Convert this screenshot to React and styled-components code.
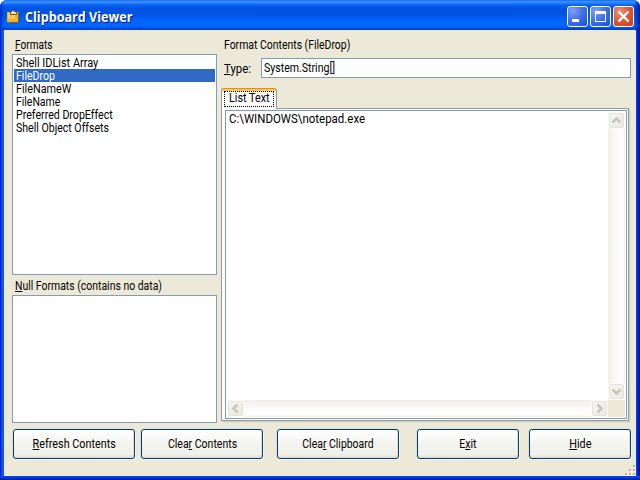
import React from 'react';
import styled, { createGlobalStyle, css } from 'styled-components';

const Global = createGlobalStyle`
  *, *::before, *::after { box-sizing: border-box; }
  html, body, #root { margin: 0; width: 640px; height: 480px; overflow: hidden; background: #fff; }
`;

const Window = styled.div`
  width: 640px;
  height: 480px;
  display: flex;
  flex-direction: column;
  overflow: hidden;
  border-radius: 7px 7px 0 0;
  background: #0046e6;
  font: 12px/13px Roboto, "Liberation Sans", sans-serif;
  color: #000;
`;

const TitleBar = styled.header`
  height: 30px;
  flex: none;
  display: flex;
  align-items: center;
  padding: 3px 6px 0 7px;
  background: linear-gradient(90deg, #0030c8 0, rgba(0,60,220,0) 4px, rgba(0,60,220,0) 634px, #001ca0 640px),
    linear-gradient(#0058ee 0, #3c92ff 1px, #2c80ff 3px, #0763f3 5px, #0053e1 8px, #0055e5 15px, #0063fb 21px, #006aff 26px, #0050e0 28px, #003dd7 30px);
`;

const Title = styled.h1`
  flex: 1;
  margin: 0 0 0 5px;
  font: bold 14px/18px "Open Sans", sans-serif;
  white-space: nowrap;
  color: #fff;
  text-shadow: 1px 1px 0 #0a1883;
`;

const Controls = styled.div`
  display: flex;
  gap: 2px;
`;

const Control = styled.button`
  width: 21px;
  height: 21px;
  padding: 0;
  display: flex;
  border: 1px solid #fff;
  border-radius: 3px;
  background: ${p => p.$close
    ? 'radial-gradient(circle at 30% 25%, #ee9478 0, #e2593a 45%, #cd3c14 100%)'
    : 'radial-gradient(circle at 25% 20%, #7f9ff5 0, #3e70ea 50%, #1b4edb 100%)'};
`;

const Client = styled.main`
  height: 450px;
  display: flex;
  flex-direction: column;
  padding: 0 4px 4px;
  background:
    linear-gradient(#0050ee, #0036e0 2px, #00138c) bottom / 100% 4px no-repeat,
    linear-gradient(90deg, #0010c8, #0831d9 1px, #1668ee 3px, #0050ee) left / 4px 100% no-repeat,
    linear-gradient(90deg, #0044e8, #0036e0 1px, #001ec0 2px, #00138c) right / 4px 100% no-repeat,
    #ece9d8;
`;

const Columns = styled.div`
  height: 399px;
  flex: none;
  display: flex;
  gap: 4px;
  padding: 8px 5px 0 8px;
`;

const Left = styled.section`
  width: 205px;
  display: flex;
  flex-direction: column;
`;

const Right = styled.section`
  width: 410px;
  display: flex;
  flex-direction: column;
`;

const Label = styled.div`
  height: ${p => p.$h || 16}px;
  padding: ${p => p.$top || 1}px 0 0 3px;
  white-space: nowrap;
`;

/* Condenses a label horizontally; $x is the width ratio. */
const Text = styled.span`
  display: inline-block;
  vertical-align: top;
  transform: scaleX(${p => p.$x || 0.88});
  transform-origin: ${p => (p.$center ? 'center' : 'left')};
  white-space: pre;
  u { text-decoration: underline; text-underline-offset: 1px; text-decoration-thickness: 1px; text-decoration-skip-ink: none; }
`;

const List = styled.ul`
  height: ${p => p.$h}px;
  margin: 0;
  padding: 1px;
  list-style: none;
  border: 1px solid #7f9db9;
  background: #fff;
`;

const Item = styled.li`
  height: 13px;
  padding: 1px 0 0 2px;
  ${p => p.$selected && css`background: #316ac5; color: #fff;`}
`;

const TypeRow = styled.div`
  height: 20px;
  margin-top: 4px;
  display: flex;
  align-items: center;
  padding-left: 3px;
`;

const TypeLabel = styled.label`
  width: 37px;
  padding-top: 3px;
`;

const Field = styled.div`
  width: 370px;
  height: 20px;
  padding: 3px 0 0 2px;
  border: 1px solid #7f9db9;
  background: #fff;
`;

const Tab = styled.div`
  width: 56px;
  height: 21px;
  margin: 10px 0 -1px;
  padding: 0 2px;
  z-index: 1;
  border: 1px solid #919b9c;
  border-top: 0;
  border-bottom: 0;
  border-radius: 3px 3px 0 0;
  background: linear-gradient(#e68b2c 0 1px, #ffc73c 1px 3px, #fff 3px, #fcfcfe);
`;

const Focus = styled.div`
  margin-top: 3px;
  height: 16px;
  padding: 0 0 0 4px;
  border: 1px dotted #000;
`;

const TabPage = styled.div`
  width: 408px;
  height: 313px;
  flex: none;
  padding: 1px 1px 1px 3px;
  border: 1px solid #919b9c;
  background: #fcfcfe;
  box-shadow: 1px 1px 0 #d0cebf, 2px 2px 0 #e3e0d0;
`;

const TextArea = styled.div`
  width: 402px;
  height: 309px;
  display: grid;
  grid-template-columns: 381px 17px;
  grid-template-rows: 288px 17px;
  padding: 1px;
  border: 1px solid #7f9db9;
  background: #fff;
`;

const Content = styled.div`
  padding: 1px 0 0 2px;
`;

const Scroll = styled.div`
  display: flex;
  flex-direction: ${p => (p.$vertical ? 'column' : 'row')};
  justify-content: space-between;
  background: linear-gradient(${p => (p.$vertical ? '90deg' : '180deg')}, #f0efe9, #fcfcfa 60%, #fefefb 88%, #eeede5);
`;

const ScrollButton = styled.button`
  width: 17px;
  height: 17px;
  padding: 0;
  display: flex;
  border: 1px solid #fff;
  border-radius: 3px;
  background: linear-gradient(135deg, #f7f6f2, #eae8de);
  box-shadow: inset 0 0 0 1px #e4e3d9;
`;

const Corner = styled.div`
  background: #ece9d8;
`;

const Footer = styled.footer`
  height: 47px;
  display: flex;
  padding-left: 9px;
`;

const Push = styled.button`
  width: ${p => p.$w}px;
  height: 30px;
  flex: none;
  margin-right: ${p => p.$gap}px;
  padding: 0;
  border: 1px solid #003c74;
  border-radius: 3px;
  background: linear-gradient(#fff, #f4f4ef 50%, #f0f0ea 88%, #dcd8cf);
  box-shadow: inset -1px 0 1px #e4e1da, 1px 1px 0 #f8f6ed, -1px -1px 0 #e3dfcd;
  font: inherit;
  color: #000;
`;

const Grip = styled.svg`
  position: absolute;
  left: 625px;
  top: 465px;
`;

const ClipboardIcon = () => (
  <svg width="13" height="14" viewBox="0 0 13 14">
    <path d="M0 2h12v11H1z" fill="#c47a10" />
    <path d="M0 2h11v10H0z" fill="#f0b030" />
    <path d="M1 3h7v6H1z" fill="#fac956" />
    <path d="M12 3v10H2v-1h9V3z" fill="#8e5209" />
    <path d="M3 2h2V0h3v2h2v3H3z" fill="#705b32" />
    <path d="M4 2h5v2H4zM5 1h2v1H5z" fill="#e8dfc2" />
  </svg>
);

const arrows = {
  up: 'M3.5 9.5 7.5 5.5 11.5 9.5',
  down: 'M3.5 5.5 7.5 9.5 11.5 5.5',
  left: 'M9.5 3.5 5.5 7.5 9.5 11.5',
  right: 'M5.5 3.5 9.5 7.5 5.5 11.5',
};

const Arrow = ({ dir }) => (
  <ScrollButton aria-label={dir}>
    <svg width="15" height="15"><path d={arrows[dir]} fill="none" stroke="#c9c7bb" strokeWidth="2.6" /></svg>
  </ScrollButton>
);

const formats = [
  ['Shell IDList Array', 0.91],
  ['FileDrop', 0.88],
  ['FileNameW', 0.9],
  ['FileName', 0.87],
  ['Preferred DropEffect', 0.885],
  ['Shell Object Offsets', 0.88],
];

export default function App() {
  return (
    <>
      <Global />
      <Window>
        <TitleBar>
          <ClipboardIcon />
          <Title><Text $x={0.9}>Clipboard Viewer</Text></Title>
          <Controls>
            <Control aria-label="Minimize"><svg width="19" height="19"><path d="M4 12h7v3H4z" fill="#fff" /></svg></Control>
            <Control aria-label="Maximize"><svg width="19" height="19"><path d="M4 4h11v11H4zM5 7v7h9V7z" fill="#fff" fillRule="evenodd" /></svg></Control>
            <Control $close aria-label="Close"><svg width="19" height="19"><path d="M4.5 4.5l10 10M14.5 4.5l-10 10" stroke="#fff" strokeWidth="2.4" /></svg></Control>
          </Controls>
        </TitleBar>
        <Client>
          <Columns>
            <Left>
              <Label><Text $x={0.84}><u>F</u>ormats</Text></Label>
              <List $h={221}>
                {formats.map(([name, x]) => (
                  <Item key={name} $selected={name === 'FileDrop'}><Text $x={x}>{name}</Text></Item>
                ))}
              </List>
              <Label $h={20} $top={5}><Text $x={0.87}><u>N</u>ull Formats (contains no data)</Text></Label>
              <List $h={128} />
            </Left>
            <Right>
              <Label><Text $x={0.87}>Format Contents (FileDrop)</Text></Label>
              <TypeRow>
                <TypeLabel><Text $x={0.95}><u>T</u>ype:</Text></TypeLabel>
                <Field><Text $x={0.88}>System.String[]</Text></Field>
              </TypeRow>
              <Tab><Focus><Text $x={0.9}>List Text</Text></Focus></Tab>
              <TabPage>
                <TextArea>
                  <Content><Text $x={0.955}>C:\WINDOWS\notepad.exe</Text></Content>
                  <Scroll $vertical><Arrow dir="up" /><Arrow dir="down" /></Scroll>
                  <Scroll><Arrow dir="left" /><Arrow dir="right" /></Scroll>
                  <Corner />
                </TextArea>
              </TabPage>
            </Right>
          </Columns>
          <Footer>
            <Push $w={122} $gap={6}><Text $center $x={0.9}><u>R</u>efresh Contents</Text></Push>
            <Push $w={122} $gap={14}><Text $center $x={0.875}>Clea<u>r</u> Contents</Text></Push>
            <Push $w={122} $gap={18}><Text $center $x={0.87}>Clea<u>r</u> Clipboard</Text></Push>
            <Push $w={102} $gap={10}><Text $center $x={0.88}>E<u>x</u>it</Text></Push>
            <Push $w={102} $gap={0}><Text $center $x={0.9}><u>H</u>ide</Text></Push>
          </Footer>
        </Client>
        <Grip width="11" height="11">
          <path d="M9 1h2v2H9zM5 5h2v2H5zM9 5h2v2H9zM1 9h2v2H1zM5 9h2v2H5zM9 9h2v2H9z" fill="#fff" />
          <path d="M8 0h2v2H8zM4 4h2v2H4zM8 4h2v2H8zM0 8h2v2H0zM4 8h2v2H4zM8 8h2v2H8z" fill="#b8b4a3" />
        </Grip>
      </Window>
    </>
  );
}
